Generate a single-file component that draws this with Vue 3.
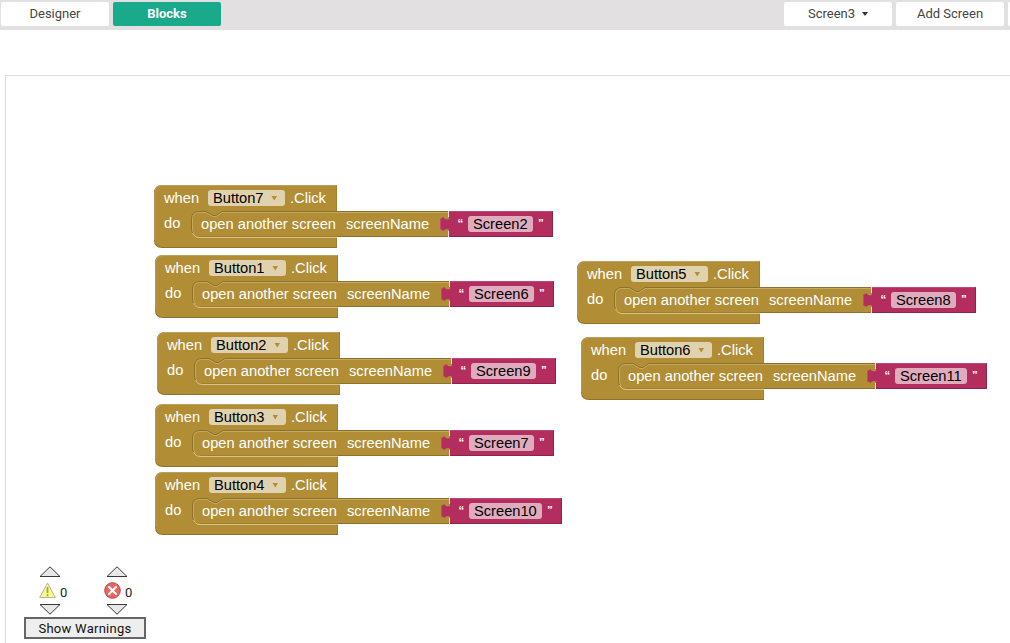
<script setup>
const blocks = [
  { button: 'Button7', screen: 'Screen2', x: 154, y: 185, field: 65 },
  { button: 'Button1', screen: 'Screen6', x: 155, y: 255, field: 65 },
  { button: 'Button2', screen: 'Screen9', x: 157, y: 332, field: 65 },
  { button: 'Button3', screen: 'Screen7', x: 155, y: 404, field: 65 },
  { button: 'Button4', screen: 'Screen10', x: 155, y: 472, field: 73 },
  { button: 'Button5', screen: 'Screen8', x: 577, y: 261, field: 65 },
  { button: 'Button6', screen: 'Screen11', x: 581, y: 337, field: 72 },
]
const counters = [
  { kind: 'warning', count: 0 },
  { kind: 'error', count: 0 },
]
</script>

<template>
  <div class="page">
    <header class="toolbar">
      <nav class="group">
        <button class="tab">Designer</button>
        <button class="tab active">Blocks</button>
      </nav>
      <nav class="group right">
        <button class="tab">Screen3<i class="caret"></i></button>
        <button class="tab">Add Screen</button>
        <button class="tab"></button>
      </nav>
    </header>

    <main class="workspace">
      <svg
        v-for="b in blocks"
        :key="b.button"
        class="block"
        :style="{ left: b.x + 'px', top: b.y + 'px' }"
        width="420"
        height="64"
      >
        <path class="dark" d="M8 0H183V26H51V52H183V63H8Q0 63 0 55V8Q0 0 8 0Z" />
        <path class="gold" d="M8 .5H182.5V26H45V52H182.5V62H8Q.7 62 .7 55V8Q.7 .5 8 .5Z" />
        <path class="lit faint" d="M.7 55V8Q.7 .5 8 .5H182.5" />
        <path class="gold" d="M45 26H295V52H45Q37 52 37 44V34Q37 26 45 26Z" />
        <path class="shade" d="M183 51.5H295" />
        <path class="shade soft" d="M183 51.5H45" />
        <path class="shade" d="M294 26.5H68L62 30.5H59L52 26.5H45Q37.5 26.5 37.5 34V44Q37.5 47 39.5 49.5" />
        <path class="lit faint" d="M294 27.5H68L62 31.5H59L52 27.5H45Q38.5 27.5 38.5 34V44Q38.5 47 40.5 49" />
        <path class="lit" d="M38.5 48Q40.5 52.5 45 52.5H183" />

        <path class="pink" :d="`M295 26H${334 + b.field}V52H295V44.5L293 44Q291 44 289 46L286 44V34L289 32Q291 34.5 293 34.5L295 34Z`" />
        <path class="pink-dark" :d="`M295 51.5H${333.5 + b.field}V26.5`" />
        <path class="pink-light" :d="`M${333 + b.field} 26.5H295`" />
        <path class="pink-light" d="M289 32.5L286.5 34.5V43.5L289 45.5" />
        <path class="seam" d="M294.5 26V32M294.5 46V52" />

        <text class="label" x="10" y="18">when</text>
        <rect class="field" x="54" y="5" width="77" height="16" rx="3" />
        <text class="value" x="59" y="18">{{ b.button }}</text>
        <path class="arrow" d="M117.5 11H123L120.25 15.5Z" />
        <text class="label" x="136" y="18">.Click</text>
        <text class="label" x="10" y="43">do</text>
        <text class="label" x="47" y="44" textLength="135">open another screen</text>
        <text class="label" x="192" y="44">screenName</text>
        <text class="quote" x="303.5" y="41.5">“</text>
        <rect class="field" x="314" y="31" :width="b.field" height="16" rx="3" />
        <text class="value" x="319" y="44">{{ b.screen }}</text>
        <text class="quote" :x="319 + b.field" y="41.5">”</text>
      </svg>

      <aside class="warnings">
        <div class="counters">
          <div v-for="c in counters" :key="c.kind" class="counter" :class="c.kind">
            <svg class="step" width="22" height="11">
              <path d="M1 10.5L11 .8L21 10.5Z" fill="#e8e8e8" stroke="#222" stroke-width=".9" />
            </svg>
            <div class="status">
              <svg v-if="c.kind === 'warning'" width="17" height="17">
                <path d="M8.5 1L16.3 15.5H.7Z" fill="#fafa8c" stroke="#b3b39a" stroke-linejoin="round" />
                <path d="M8.5 5V11M8.5 12.3V14.2" stroke="#a3a34c" stroke-width="1.8" />
              </svg>
              <svg v-else width="17" height="17">
                <circle cx="8.5" cy="8.5" r="7.8" fill="#f3605d" stroke="#9c5452" />
                <path d="M5 5L12 12M12 5L5 12" stroke="#fff" stroke-width="2.2" stroke-linecap="round" />
              </svg>
              <span>{{ c.count }}</span>
            </div>
            <svg class="step" width="22" height="11">
              <path d="M1 .5L11 10.2L21 .5Z" fill="#e8e8e8" stroke="#222" stroke-width=".9" />
            </svg>
          </div>
        </div>
        <button class="show">Show Warnings</button>
      </aside>
    </main>
  </div>
</template>

<style scoped>
.page {
  display: flex;
  flex-direction: column;
  width: 1010px;
  height: 643px;
  overflow: hidden;
  background: #fff;
  font-family: Roboto, sans-serif;
}
.toolbar {
  display: flex;
  flex: none;
  box-sizing: border-box;
  height: 30px;
  padding: 2px 0 4px 1px;
  background: #e2e0e1;
}
.group {
  display: flex;
  gap: 4px;
}
.right {
  width: 226px;
  margin-left: auto;
  overflow: hidden;
}
.tab {
  display: flex;
  flex: none;
  align-items: center;
  justify-content: center;
  width: 108px;
  height: 24px;
  padding: 0 0 1px;
  border: 0;
  border-radius: 2px;
  background: #fff;
  color: #444;
  font: 13px Roboto, sans-serif;
}
.active {
  background: #19a98b;
  color: #fff;
  font-weight: 700;
}
.caret {
  margin-left: 7px;
  border: 2.5px solid transparent;
  border-width: 4px 3px 0;
  border-top-color: #333;
}
.workspace {
  display: flex;
  flex: 1;
  align-items: flex-end;
  box-sizing: border-box;
  margin: 45px 0 0 5px;
  border-top: 1px solid #ddd;
  border-left: 1px solid #ddd;
}
.block {
  position: absolute;
  font: 14.67px "Liberation Sans", Arial, sans-serif;
}
.gold { fill: #b18e35; }
.dark { fill: #8e722a; }
.lit { fill: none; stroke: #d8c28a; }
.faint { opacity: .5; }
.shade { fill: none; stroke: #8e722a; }
.soft { opacity: .5; }
.pink { fill: #b32d5e; }
.pink-dark { fill: none; stroke: #8f244b; }
.pink-light { fill: none; stroke: #c9668b; opacity: .5; }
.seam { fill: none; stroke: #f3dbe3; }
.label { fill: #fff; }
.field { fill: #fff; fill-opacity: .6; }
.value { fill: #000; }
.arrow { fill: #b18e35; }
.quote { fill: #fff; font-size: 11.5px; font-weight: 700; }
.warnings {
  display: flex;
  flex-direction: column;
  margin: 0 0 4px 18px;
}
.counters {
  display: flex;
  gap: 37px;
  padding-left: 15px;
}
.counter {
  display: flex;
  flex-direction: column;
  width: 30px;
}
.step {
  display: block;
}
.status {
  display: flex;
  align-items: center;
  gap: 4px;
  height: 27px;
  color: #222;
  font-size: 13px;
}
.status span {
  padding-top: 3px;
}
.error .status {
  gap: 3px;
  margin-left: -2px;
}
.error .status span {
  padding-left: 1px;
}
.show {
  box-sizing: border-box;
  width: 122px;
  height: 22px;
  margin-top: 2px;
  padding: 0;
  border: 2px solid #666;
  background: #eee;
  color: #111;
  font: 13px Roboto, sans-serif;
  letter-spacing: .27px;
}
</style>
